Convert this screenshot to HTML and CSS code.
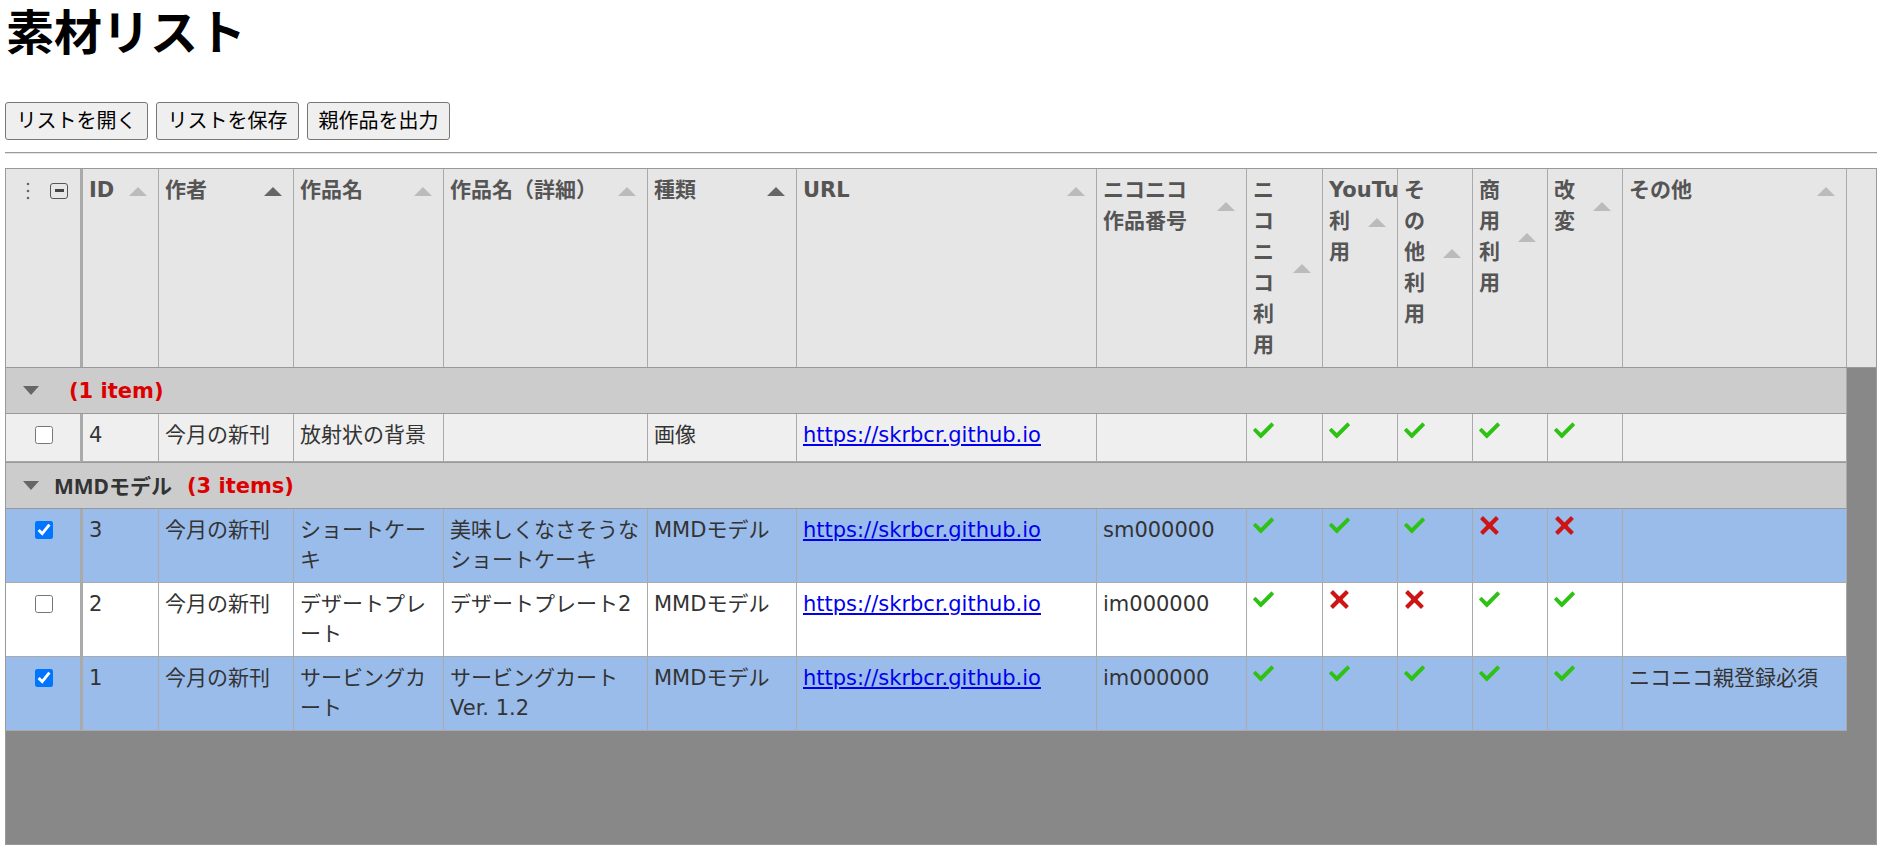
FILE: index.html
```html
<!DOCTYPE html>
<html lang="ja">
<head>
<meta charset="utf-8">
<title>素材リスト</title>
<link rel="stylesheet" href="styles.css">
</head>
<body>
<svg class="defs" width="0" height="0" aria-hidden="true">
  <symbol id="tick" viewBox="0 0 24 24"><path fill="#2DC214" fill-rule="evenodd" d="M21.652,3.211c-0.293-0.295-0.77-0.295-1.061,0L9.41,14.34c-0.293,0.297-0.771,0.297-1.062,0L3.449,9.351C3.304,9.203,3.114,9.13,2.923,9.129C2.73,9.128,2.534,9.201,2.387,9.351l-2.165,1.946C0.078,11.445,0,11.63,0,11.823c0,0.194,0.078,0.397,0.223,0.544l4.94,5.184c0.292,0.296,0.771,0.776,1.062,1.07l2.124,2.141c0.292,0.293,0.769,0.293,1.062,0l14.366-14.34c0.293-0.294,0.293-0.777,0-1.071L21.652,3.211z"/></symbol>
  <symbol id="cross" viewBox="0 0 24 24"><path fill="#CE1515" d="M22.245,4.015c0.313,0.313,0.313,0.826,0,1.139l-6.276,6.27c-0.313,0.312-0.313,0.826,0,1.14l6.273,6.272c0.313,0.313,0.313,0.826,0,1.14l-2.285,2.277c-0.314,0.312-0.828,0.312-1.142,0l-6.271-6.271c-0.313-0.313-0.828-0.313-1.141,0l-6.276,6.267c-0.313,0.313-0.826,0.313-1.14,0l-2.282-2.28c-0.313-0.313-0.313-0.826,0-1.14l6.278-6.269c0.313-0.312,0.313-0.826,0-1.14L1.709,5.147c-0.314-0.313-0.314-0.827,0-1.14l2.284-2.278c0.315-0.312,0.828-0.312,1.142,0L11.405,8c0.314,0.314,0.828,0.314,1.141,0.001l6.276-6.267c0.312-0.312,0.826-0.312,1.141,0L22.245,4.015z"/></symbol>
</svg>

<h1 class="title">素材リスト</h1>
<div class="toolbar">
  <button class="btn" type="button">リストを開く</button>
  <button class="btn" type="button">リストを保存</button>
  <button class="btn" type="button">親作品を出力</button>
</div>
<hr class="sep">

<div class="tbl">
  <div class="thead">
    <div class="hcol c-sel">
      <div class="selhead">
        <svg class="vdots" width="4" height="18" viewBox="0 0 4 18"><circle cx="2" cy="2" r="1.3" fill="#666"/><circle cx="2" cy="9" r="1.3" fill="#666"/><circle cx="2" cy="16" r="1.3" fill="#666"/></svg>
        <span class="collapse-icon"><span class="collapse-bar"></span></span>
      </div>
    </div>
    <div class="hcol c-id"><div class="hcontent"><div class="htitle">ID</div><span class="arrow"></span></div></div>
    <div class="hcol c-author"><div class="hcontent"><div class="htitle">作者</div><span class="arrow active"></span></div></div>
    <div class="hcol c-name"><div class="hcontent"><div class="htitle">作品名</div><span class="arrow"></span></div></div>
    <div class="hcol c-detail"><div class="hcontent"><div class="htitle">作品名（詳細）</div><span class="arrow"></span></div></div>
    <div class="hcol c-type"><div class="hcontent"><div class="htitle">種類</div><span class="arrow active"></span></div></div>
    <div class="hcol c-url"><div class="hcontent"><div class="htitle">URL</div><span class="arrow"></span></div></div>
    <div class="hcol c-num"><div class="hcontent"><div class="htitle">ニコニコ作品番号</div><span class="arrow"></span></div></div>
    <div class="hcol c-nico"><div class="hcontent"><div class="htitle">ニコニコ利用</div><span class="arrow"></span></div></div>
    <div class="hcol c-yt"><div class="hcontent"><div class="htitle">YouTube利用</div><span class="arrow"></span></div></div>
    <div class="hcol c-other"><div class="hcontent"><div class="htitle">その他利用</div><span class="arrow"></span></div></div>
    <div class="hcol c-com"><div class="hcontent"><div class="htitle">商用利用</div><span class="arrow"></span></div></div>
    <div class="hcol c-mod"><div class="hcontent"><div class="htitle">改変</div><span class="arrow"></span></div></div>
    <div class="hcol c-note"><div class="hcontent"><div class="htitle">その他</div><span class="arrow"></span></div></div>
  </div>

  <div class="tbody">
    <div class="group">
      <span class="gtoggle"></span><span class="gname"></span><span class="gcount">(1 item)</span>
    </div>
    <div class="row even">
      <div class="cell c-sel"><input class="rowcheck" type="checkbox"></div>
      <div class="cell c-id">4</div>
      <div class="cell c-author">今月の新刊</div>
      <div class="cell c-name">放射状の背景</div>
      <div class="cell c-detail"></div>
      <div class="cell c-type">画像</div>
      <div class="cell c-url"><a class="link" href="https://skrbcr.github.io">https://skrbcr.github.io</a></div>
      <div class="cell c-num"></div>
      <div class="cell c-nico"><svg class="ic"><use href="#tick"/></svg></div>
      <div class="cell c-yt"><svg class="ic"><use href="#tick"/></svg></div>
      <div class="cell c-other"><svg class="ic"><use href="#tick"/></svg></div>
      <div class="cell c-com"><svg class="ic"><use href="#tick"/></svg></div>
      <div class="cell c-mod"><svg class="ic"><use href="#tick"/></svg></div>
      <div class="cell c-note"></div>
    </div>

    <div class="group">
      <span class="gtoggle"></span><span class="gname">MMDモデル</span><span class="gcount">(3 items)</span>
    </div>
    <div class="row selected">
      <div class="cell c-sel"><input class="rowcheck" type="checkbox" checked></div>
      <div class="cell c-id">3</div>
      <div class="cell c-author">今月の新刊</div>
      <div class="cell c-name">ショートケーキ</div>
      <div class="cell c-detail">美味しくなさそうなショートケーキ</div>
      <div class="cell c-type">MMDモデル</div>
      <div class="cell c-url"><a class="link" href="https://skrbcr.github.io">https://skrbcr.github.io</a></div>
      <div class="cell c-num">sm000000</div>
      <div class="cell c-nico"><svg class="ic"><use href="#tick"/></svg></div>
      <div class="cell c-yt"><svg class="ic"><use href="#tick"/></svg></div>
      <div class="cell c-other"><svg class="ic"><use href="#tick"/></svg></div>
      <div class="cell c-com"><svg class="ic"><use href="#cross"/></svg></div>
      <div class="cell c-mod"><svg class="ic"><use href="#cross"/></svg></div>
      <div class="cell c-note"></div>
    </div>
    <div class="row odd">
      <div class="cell c-sel"><input class="rowcheck" type="checkbox"></div>
      <div class="cell c-id">2</div>
      <div class="cell c-author">今月の新刊</div>
      <div class="cell c-name">デザートプレート</div>
      <div class="cell c-detail">デザートプレート2</div>
      <div class="cell c-type">MMDモデル</div>
      <div class="cell c-url"><a class="link" href="https://skrbcr.github.io">https://skrbcr.github.io</a></div>
      <div class="cell c-num">im000000</div>
      <div class="cell c-nico"><svg class="ic"><use href="#tick"/></svg></div>
      <div class="cell c-yt"><svg class="ic"><use href="#cross"/></svg></div>
      <div class="cell c-other"><svg class="ic"><use href="#cross"/></svg></div>
      <div class="cell c-com"><svg class="ic"><use href="#tick"/></svg></div>
      <div class="cell c-mod"><svg class="ic"><use href="#tick"/></svg></div>
      <div class="cell c-note"></div>
    </div>
    <div class="row selected">
      <div class="cell c-sel"><input class="rowcheck" type="checkbox" checked></div>
      <div class="cell c-id">1</div>
      <div class="cell c-author">今月の新刊</div>
      <div class="cell c-name">サービングカート</div>
      <div class="cell c-detail">サービングカート Ver. 1.2</div>
      <div class="cell c-type">MMDモデル</div>
      <div class="cell c-url"><a class="link" href="https://skrbcr.github.io">https://skrbcr.github.io</a></div>
      <div class="cell c-num">im000000</div>
      <div class="cell c-nico"><svg class="ic"><use href="#tick"/></svg></div>
      <div class="cell c-yt"><svg class="ic"><use href="#tick"/></svg></div>
      <div class="cell c-other"><svg class="ic"><use href="#tick"/></svg></div>
      <div class="cell c-com"><svg class="ic"><use href="#tick"/></svg></div>
      <div class="cell c-mod"><svg class="ic"><use href="#tick"/></svg></div>
      <div class="cell c-note">ニコニコ親登録必須</div>
    </div>
  </div>
</div>
</body>
</html>
```

FILE: styles.css
```css
html, body {
  margin: 0;
  padding: 0;
  background: #fff;
}

body {
  padding: 0 2px 0 5px;
  font-family: "DejaVu Sans", "Noto Sans CJK JP", sans-serif;
  color: #000;
}

.defs {
  position: absolute;
  width: 0;
  height: 0;
  overflow: hidden;
}

.title {
  margin: -6px 0 0;
  padding-left: 1px;
  font-family: "Noto Sans CJK JP", sans-serif;
  font-size: 48px;
  font-weight: 700;
  line-height: 70px;
}

.toolbar {
  display: flex;
  gap: 8px;
  margin-top: 38px;
}

.btn {
  height: 38px;
  padding: 0 10.5px;
  border: 1px solid #767676;
  border-radius: 3px;
  background: #efefef;
  color: #000;
  font-family: "DejaVu Sans", "Noto Sans CJK JP", sans-serif;
  font-size: 20px;
  line-height: 30px;
}

.sep {
  margin: 12px 0 14px;
  height: 0;
  border: 0;
  border-top: 1px solid #9a9a9a;
  border-bottom: 1px solid #e4e4e4;
}

/* table */
.tbl {
  box-sizing: border-box;
  height: 677px;
  border: 1px solid #999;
  background: #888;
  overflow: hidden;
  font-size: 21px;
}

.thead {
  display: flex;
  height: 199px;
  box-sizing: border-box;
  background: #e6e6e6;
  border-bottom: 1px solid #999;
  color: #555;
  font-weight: bold;
}

.hcol {
  flex: none;
  box-sizing: border-box;
  height: 100%;
  padding: 6px;
  border-right: 1px solid #aaa;
  overflow: hidden;
}

.hcontent {
  position: relative;
}

.htitle {
  padding-right: 37px;
  line-height: 31px;
}

.arrow {
  position: absolute;
  right: 5px;
  top: 50%;
  margin-top: -4px;
  width: 0;
  height: 0;
  border-left: 9px solid transparent;
  border-right: 9px solid transparent;
  border-bottom: 9px solid #bbb;
}

.arrow.active {
  border-bottom-color: #666;
}

.selhead {
  display: flex;
  align-items: center;
  height: 31px;
  padding-left: 14px;
  gap: 20px;
}

.vdots {
  display: block;
}

.collapse-icon {
  box-sizing: border-box;
  width: 18px;
  height: 16px;
  border: 1.5px solid #555;
  border-radius: 3px;
  display: flex;
  align-items: center;
  justify-content: center;
}

.collapse-bar {
  width: 9px;
  height: 2.5px;
  background: #444;
}

/* column widths */
.c-sel { width: 77px; border-right: 3px solid #aaa; }
.c-id { width: 76px; }
.c-author { width: 135px; }
.c-name { width: 150px; }
.c-detail { width: 204px; }
.c-type { width: 149px; }
.c-url { width: 300px; }
.c-num { width: 150px; }
.c-nico { width: 76px; }
.c-yt { width: 75px; }
.c-other { width: 75px; }
.c-com { width: 75px; }
.c-mod { width: 75px; }
.c-note { width: 224px; }

/* body */
.tbody {
  width: 1841px;
}

.group {
  display: flex;
  align-items: center;
  box-sizing: border-box;
  height: 47px;
  background: #ccc;
  border-top: 1px solid #999;
  border-bottom: 1px solid #999;
  border-right: 1px solid #aaa;
  padding-left: 17px;
  color: #333;
  font-weight: bold;
  line-height: 30px;
}

.group:first-child {
  border-top: 0;
  height: 46px;
}

.gtoggle {
  width: 0;
  height: 0;
  border-top: 9px solid #666;
  border-left: 8.5px solid transparent;
  border-right: 8.5px solid transparent;
  margin-right: 15px;
}

.gname {
  font-family: "Noto Sans", "Noto Sans CJK JP", sans-serif;
}

.gcount {
  color: #d00;
  margin-left: 15px;
}

.row {
  display: flex;
  box-sizing: border-box;
  min-height: 48px;
  border-bottom: 1px solid #aaa;
  color: #333;
  background: #fff;
}

.row.even { background: #efefef; }
.row.odd { background: #fff; }
.row.selected { background: #9abcea; }

.cell {
  flex: none;
  box-sizing: border-box;
  padding: 6px 6px 7px;
  border-right: 1px solid #aaa;
  line-height: 30px;
  overflow: hidden;
}

.cell.c-sel {
  display: flex;
  justify-content: center;
  align-items: flex-start;
  border-right: 3px solid #aaa;
}

.rowcheck {
  width: 18px;
  height: 18px;
  margin: 6px 0 0 2px;
}

.ic {
  display: block;
  width: 21px;
  height: 21px;
}

.link {
  color: #0000ee;
  text-decoration: underline;
}
```
